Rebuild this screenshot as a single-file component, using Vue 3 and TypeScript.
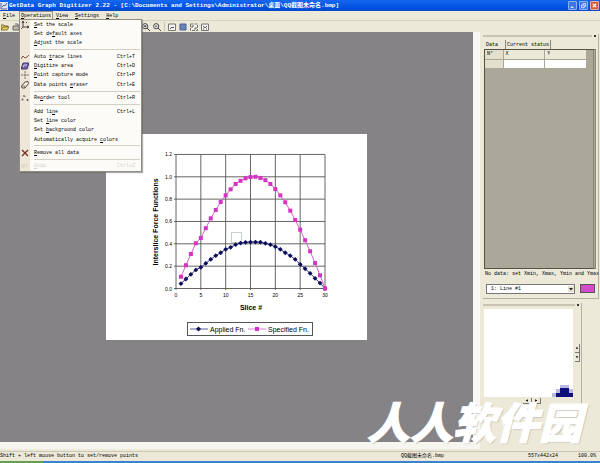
<script setup lang="ts">
import { computed, ref } from 'vue'

interface MenuItem {
  before: string
  key: string
  after: string
  shortcut?: string
  icon?: string
  disabled?: boolean
}

const menuGroups: MenuItem[][] = [
  [
    { before: '', key: 'S', after: 'et the scale', icon: 'scale' },
    { before: 'Set de', key: 'f', after: 'ault axes' },
    { before: '', key: 'A', after: 'djust the scale' },
  ],
  [
    { before: 'Auto ', key: 't', after: 'race lines', shortcut: 'Ctrl+T', icon: 'trace' },
    { before: '', key: 'D', after: 'igitize area', shortcut: 'Ctrl+D', icon: 'area' },
    { before: '', key: 'P', after: 'oint capture mode', shortcut: 'Ctrl+P', icon: 'point' },
    { before: 'Data points ', key: 'e', after: 'raser', shortcut: 'Ctrl+E', icon: 'eraser' },
  ],
  [{ before: 'Re', key: 'o', after: 'rder tool', shortcut: 'Ctrl+R', icon: 'reorder' }],
  [
    { before: 'Add li', key: 'n', after: 'e', shortcut: 'Ctrl+L' },
    { before: 'Set ', key: 'l', after: 'ine color' },
    { before: 'Set ', key: 'b', after: 'ackground color' },
    { before: 'Automatically acquire ', key: 'c', after: 'olors' },
  ],
  [{ before: '', key: 'R', after: 'emove all data', icon: 'remove' }],
  [{ before: '', key: 'U', after: 'ndo', shortcut: 'Ctrl+Z', icon: 'undo', disabled: true }],
]

const specified = [
  0.105, 0.208, 0.309, 0.405, 0.452, 0.54, 0.628, 0.703, 0.774, 0.834, 0.888, 0.936, 0.964, 0.986, 0.998,
  1, 0.99, 0.97, 0.936, 0.89, 0.834, 0.772, 0.697, 0.613, 0.526, 0.432, 0.333, 0.228, 0.118, 0,
]
const applied = [
  0.043, 0.085, 0.127, 0.166, 0.19, 0.225, 0.261, 0.294, 0.32, 0.351, 0.369, 0.392, 0.407, 0.413, 0.416,
  0.416, 0.415, 0.404, 0.392, 0.374, 0.351, 0.32, 0.294, 0.261, 0.216, 0.177, 0.136, 0.091, 0.049, 0,
]

const toPoints = (values: number[]) =>
  values.map((v, i) => ({ x: 70 + ((i + 1) * 149) / 30, y: 154.5 - v * 111.7 }))
const toLine = (pts: { x: number; y: number }[]) => pts.map((p) => `${p.x},${p.y}`).join(' ')

const specifiedPoints = computed(() => toPoints(specified))
const appliedPoints = computed(() => toPoints(applied))

const yTicks = [0, 1, 2, 3, 4, 5, 6].map((i) => ({ y: 154.5 - i * 22.34, label: (i * 0.2).toFixed(1) }))
const xTicks = [0, 1, 2, 3, 4, 5, 6].map((i) => ({ x: 70 + (i * 149) / 6, label: String(i * 5) }))

const activeLine = ref('1')
</script>

<template>
  <div class="app">
    <header class="title">
      <svg class="logo" viewBox="0 0 8 8"><rect width="8" height="8" fill="#dfe3ee" /><path d="M1 1v6h6M2 5l2-2 1 1 2-3" fill="none" stroke="#5a5f9a" /></svg>
      <h1>GetData Graph Digitizer 2.22 - [C:\Documents and Settings\Administrator\桌面\QQ截图未命名.bmp]</h1>
      <div class="win">
        <button aria-label="Minimize"><svg viewBox="0 0 8 8"><path d="M2 6h3" stroke="#fff" stroke-width="1.4" /></svg></button>
        <button aria-label="Restore"><svg viewBox="0 0 8 8"><path d="M3.5 3V1.8h3v3H5.500M1.800 3.500h3v3h-3z" fill="none" stroke="#fff" stroke-width=".9" /></svg></button>
        <button class="close" aria-label="Close"><svg viewBox="0 0 8 8"><path d="M2 2l4 4M6 2l-4 4" stroke="#fff" stroke-width="1.300" /></svg></button>
      </div>
    </header>

    <nav class="menubar">
      <button><u>F</u>ile</button>
      <div class="open">
        <button class="active"><u>O</u>perations</button>
        <div class="menu">
          <div v-for="(group, g) in menuGroups" :key="g" class="group">
            <button v-for="item in group" :key="item.after" class="item" :disabled="item.disabled">
              <span class="icon">
                <svg v-if="item.icon === 'scale'" viewBox="0 0 8 8"><path d="M2 0v6h6M0 8l2-2M1 2l1-2 1 2M6 5l2 1-2 1" fill="none" stroke="#333" stroke-width=".9" /><path d="M5 1.500h1" stroke="#333" /></svg>
                <svg v-else-if="item.icon === 'trace'" viewBox="0 0 8 8"><path d="M0 6l2-3 2 2 2-1 2-2" fill="none" stroke="#8c5348" /></svg>
                <svg v-else-if="item.icon === 'area'" viewBox="0 0 8 8"><path d="M2 1h6L6 7H0z" fill="#7467a8" stroke="#403670" /><path d="M2 5l1-2h3" fill="none" stroke="#d7d2ea" /></svg>
                <svg v-else-if="item.icon === 'point'" viewBox="0 0 8 8"><path d="M4 0v2.500M4 5.500V8M0 4h2.500M5.500 4H8" stroke="#777" /><circle cx="4" cy="4" r="1" fill="#a06a60" /></svg>
                <svg v-else-if="item.icon === 'eraser'" viewBox="0 0 8 8"><path d="M4 1l3-.5.5 2L4 7H1L.5 5z" fill="#f2ece4" stroke="#5c4a40" /><path d="M1 5l2.500 0L4 7" fill="none" stroke="#5c4a40" stroke-width=".7" /></svg>
                <svg v-else-if="item.icon === 'reorder'" viewBox="0 0 8 8"><circle cx="1.500" cy="5.500" r="1" fill="#8c5348" /><circle cx="3" cy="2" r="1" fill="#777" /><circle cx="6.500" cy="6" r="1" fill="#555" /><path d="M3 2l2 1" stroke="#888" stroke-width=".8" /></svg>
                <svg v-else-if="item.icon === 'remove'" viewBox="0 0 8 8"><path d="M1 1l6 6M7 1L1 7" stroke="#7a2c24" stroke-width="1.400" /></svg>
                <svg v-else-if="item.icon === 'undo'" viewBox="0 0 8 8"><path d="M1 2v3h3M1 5c2-3 5-3 6 0" fill="none" stroke="#d4cfc0" /></svg>
              </span>
              <span class="label">{{ item.before }}<u>{{ item.key }}</u>{{ item.after }}</span>
              <span class="shortcut">{{ item.shortcut }}</span>
            </button>
          </div>
        </div>
      </div>
      <button><u>V</u>iew</button>
      <button><u>S</u>ettings</button>
      <button><u>H</u>elp</button>
    </nav>

    <div class="toolbar">
      <div class="tools">
        <button aria-label="Open"><svg viewBox="0 0 8 8"><path d="M0 7V2h3l1 1h3v1" fill="#e8c95a" stroke="#66571c" stroke-width=".8" /><path d="M0 7l2-3h6L6 7z" fill="#f0d36a" stroke="#66571c" stroke-width=".8" /></svg></button>
        <button aria-label="Save"><svg viewBox="0 0 8 8"><path d="M1 3h6v4H1z" fill="#bdb9a8" stroke="#666" /><path d="M3 1h3v2" fill="none" stroke="#666" /></svg></button>
      </div>
      <div class="tools view">
        <button aria-label="Zoom in"><svg viewBox="0 0 8 8"><circle cx="3.200" cy="3.200" r="2.600" fill="#eee" stroke="#444" /><path d="M5 5l3 3M2 3.200h2.400M3.200 2v2.400" stroke="#444" /></svg></button>
        <button aria-label="Zoom out"><svg viewBox="0 0 8 8"><circle cx="3.200" cy="3.200" r="2.600" fill="#eee" stroke="#444" /><path d="M5 5l3 3M2 3.200h2.400" stroke="#444" /></svg></button>
        <i class="split"></i>
        <button aria-label="Fit image"><svg viewBox="0 0 8 8"><path d="M.5 1h7v6.500h-7z" fill="#f4f2ea" stroke="#777" /><path d="M2 6l2-2 1 1 1-1" fill="none" stroke="#555" /></svg></button>
        <button aria-label="Grid"><svg viewBox="0 0 8 8"><path d="M1 1h6v6H1z" fill="#7185bb" stroke="#445b9c" /><path d="M3 1v6M5 1v6M1 3h6M1 5h6" stroke="#6578ad" stroke-width=".5" /></svg></button>
        <button aria-label="Show window"><svg viewBox="0 0 8 8"><path d="M.5 1h7v6.500h-7z" fill="#f4f2ea" stroke="#777" stroke-dasharray="3 1" /><path d="M2 5V3h2M4 6h2V4" fill="none" stroke="#666" /></svg></button>
        <button aria-label="Show magnifier"><svg viewBox="0 0 8 8"><path d="M.5 1h7v6.500h-7z" fill="#f4f2ea" stroke="#777" /><path d="M2 3l1 1 1 1 2-2M2 6h1M5 6h1" fill="none" stroke="#555" /></svg></button>
      </div>
    </div>

    <main>
      <section class="canvas">
        <svg class="chart" viewBox="0 0 261 206" role="img" aria-label="Interslice Force Functions">
          <rect width="261" height="206" fill="#fff" />
          <g stroke="#555" stroke-width=".9">
            <line v-for="t in yTicks" :key="t.y" x1="68" x2="219" :y1="t.y" :y2="t.y" />
            <line v-for="t in xTicks" :key="t.x" y1="20.500" y2="156" :x1="t.x" :x2="t.x" />
          </g>
          <g class="tick">
            <text v-for="t in yTicks" :key="t.label" x="66" :y="t.y + 2" text-anchor="end">{{ t.label }}</text>
            <text v-for="t in xTicks" :key="t.label" :x="t.x" y="163" text-anchor="middle">{{ t.label }}</text>
          </g>
          <text class="axis" x="145" y="176" text-anchor="middle">Slice #</text>
          <text class="axis" transform="translate(52 88) rotate(-90)" text-anchor="middle">Interslice Force Functions</text>
          <rect x="125.500" y="98.500" width="10" height="10" fill="none" stroke="#b9c9b9" stroke-width=".8" />
          <polyline :points="toLine(appliedPoints)" fill="none" stroke="#33338c" />
          <path v-for="p in appliedPoints" :key="p.x" :d="`M${p.x - 2.4} ${p.y}l2.400-2.400 2.400 2.400-2.400 2.400z`" fill="#0c0c5c" />
          <polyline :points="toLine(specifiedPoints)" fill="none" stroke="#d65fcb" />
          <rect v-for="p in specifiedPoints" :key="p.x" :x="p.x - 2" :y="p.y - 2" width="4" height="4" fill="#d633c4" />
          <rect x="81.500" y="188.500" width="125" height="13" fill="#fff" stroke="#555" />
          <path d="M84 195h18" stroke="#33338c" stroke-width=".8" />
          <path d="M90 195l2.500-2.500 2.500 2.500-2.500 2.500z" fill="#0c0c5c" />
          <text class="key" x="104" y="198">Applied Fn.</text>
          <path d="M142 195h18" stroke="#d65fcb" stroke-width=".8" />
          <rect x="149" y="193" width="4" height="4" fill="#d633c4" />
          <text class="key" x="162" y="198">Specified Fn.</text>
        </svg>
      </section>
      <div class="scroll"></div>

      <aside>
        <section class="panel data">
          <div class="grip"><i></i><button aria-label="Close data panel"></button></div>
          <div class="tabs">
            <button class="on">Data</button>
            <button>Current status</button>
          </div>
          <div class="sheet">
            <table>
              <thead><tr><th class="num">N°</th><th>X</th><th>Y</th></tr></thead>
              <tbody><tr><td class="num"></td><td></td><td></td></tr></tbody>
            </table>
          </div>
          <p>No data: set Xmin, Xmax, Ymin and Ymax</p>
          <div class="line">
            <div class="pick">
              <select v-model="activeLine" aria-label="Line"><option value="1">1: Line #1</option></select>
              <svg viewBox="0 0 6 6"><path d="M1 2h4L3 4.500z" fill="#222" /></svg>
            </div>
            <button class="swatch" aria-label="Line color"></button>
          </div>
        </section>

        <section class="panel lens">
          <div class="grip"><i></i><button aria-label="Close magnifier"></button></div>
          <div class="row">
            <svg class="zoomed" viewBox="0 0 89 88">
              <rect width="89" height="88" fill="#fff" />
              <path d="M68 84h4v-4h4v-4h9v4h4v8H68z" fill="#b9b9e4" />
              <path d="M72 84h4v-4h9v4h4v4H72z" fill="#10107c" />
              <path d="M76 79h9v5h-9z" fill="#10107c" />
            </svg>
            <div class="nudge side">
              <button aria-label="Up"><svg viewBox="0 0 5 9"><path d="M1 5.500h3L2.500 3z" /></svg></button>
              <button aria-label="Down"><svg viewBox="0 0 5 9"><path d="M1 3.500h3L2.500 6z" /></svg></button>
            </div>
          </div>
          <div class="nudge">
            <button aria-label="Left"><svg viewBox="0 0 9 5"><path d="M5.500 1v3L3 2.500z" /></svg></button>
            <button aria-label="Right"><svg viewBox="0 0 9 5"><path d="M3.500 1v3L6 2.500z" /></svg></button>
          </div>
        </section>
      </aside>
      <div class="hscroll"></div>
      <div class="watermark">人人软件园</div>
    </main>

    <footer>
      <span class="hint">Shift + left mouse button to set/remove points</span>
      <span class="file">QQ截图未命名.bmp</span>
      <span class="size">557x442x24</span>
      <span class="pct">100.0%</span>
    </footer>
    <div class="taskbar"><i></i></div>
  </div>
</template>

<style>
body {
  background: #ece9d8;
}
</style>

<style scoped>
.app {
  display: flex;
  flex-direction: column;
  height: 100vh;
  overflow: hidden;
  background: #ece9d8;
  color: #000;
  font: 5px/8px 'Liberation Mono', 'Noto Sans CJK SC', monospace;
}
* {
  box-sizing: border-box;
}
button {
  padding: 0;
  border: 0;
  background: none;
  color: inherit;
  font: inherit;
}
svg {
  display: block;
}
.title {
  display: flex;
  align-items: center;
  gap: 1px;
  flex: 0 0 11px;
  background: linear-gradient(#1668f0, #0353e4 60%, #0448cc);
}
.logo {
  width: 8px;
  height: 8px;
}
h1 {
  flex: 1;
  margin: 0;
  color: #fff;
  font-size: 6px;
  line-height: 10px;
  font-weight: 700;
  white-space: nowrap;
}
.win {
  display: flex;
  gap: 2px;
  padding-right: 1px;
}
.win button {
  width: 9px;
  height: 9px;
  border: 1px solid #8fb2f2;
  border-radius: 1px;
  background: #3d74e6;
}
.win .close {
  border-color: #eab0a0;
  background: #d9532f;
}
.menubar {
  display: flex;
  align-items: flex-start;
  flex: 0 0 9px;
}
.menubar > button {
  padding: 1px 4px 0 3px;
}
.open {
  position: relative;
}
.active {
  display: block;
  height: 9px;
  padding: 0 1px;
  border: 1px solid #9a978a;
  border-bottom: 0;
  line-height: 8px;
}
.menu {
  position: absolute;
  z-index: 2;
  top: 8px;
  left: 0;
  display: flex;
  flex-direction: column;
  width: 123px;
  height: 153px;
  border: 1px solid #8f8c80;
  background: linear-gradient(90deg, #eee7d8 10px, #fcfbf7 10px);
  box-shadow: 1px 1px 1px #6668;
}
.group {
  display: contents;
}
.group + .group::before {
  content: '';
  flex: 0 0 1px;
  margin: 1px 1px 2px 14px;
  background: #d3d0c3;
}
.item {
  display: flex;
  flex: 1;
  align-items: center;
  min-height: 0;
  padding: 0 6px 0 1px;
  text-align: left;
}
.icon {
  width: 13px;
}
.icon svg {
  width: 8px;
  height: 8px;
}
.label {
  flex: 1;
  white-space: nowrap;
}
.item:disabled {
  color: #d4d1c6;
}
.toolbar {
  display: flex;
  flex: 0 0 12px;
  align-items: center;
  padding-left: 1px;
  border-top: 1px solid #d5d2c2;
}
.tools {
  display: flex;
  align-items: center;
  gap: 3px;
  width: 141px;
}
.toolbar button,
.toolbar svg {
  width: 8px;
  height: 8px;
}
.split {
  width: 1px;
  height: 9px;
  background: #c8c5b5;
}
main {
  position: relative;
  display: grid;
  flex: 1;
  grid-template-columns: 1fr 7px 120px;
  grid-template-rows: 1fr 9px;
  min-height: 0;
}
.canvas {
  display: grid;
  place-items: center;
  background: #858385;
}
.chart {
  width: 261px;
  height: 206px;
  font-family: 'Liberation Sans', sans-serif;
}
.tick {
  font-size: 5px;
}
.axis {
  font-size: 7px;
  font-weight: 700;
}
.key {
  font-size: 7px;
}
.scroll {
  background: #f8f7f3;
}
aside {
  grid-row: 1 / 3;
  grid-column: 3;
  padding: 2px 1px 0 3px;
}
.hscroll {
  grid-row: 2;
  grid-column: 1 / 3;
  margin-bottom: 2px;
  background: #f7f5ef;
}
.panel {
  border-right: 1px solid #b4b1a2;
}
.data {
  display: flex;
  flex-direction: column;
  height: 265px;
  border-bottom: 1px solid #b4b1a2;
}
.grip {
  display: flex;
  align-items: center;
  height: 3px;
  gap: 2px;
  padding-right: 2px;
}
.grip i {
  flex: 1;
  height: 2px;
  border: 1px solid #c7c4b4;
}
.grip button {
  width: 2px;
  height: 2px;
  background: #333;
}
.tabs {
  display: flex;
  margin-top: 3px;
  padding-left: 2px;
}
.tabs button {
  height: 9px;
  padding: 0 1px;
  border-right: 1px solid #8a8778;
}
.tabs .on {
  width: 21px;
  text-align: left;
}
.sheet {
  flex: 1;
  margin: 0 2px 0 1px;
  border: 1px solid #555247;
  border-right: 3px double #8a8778;
  background: #aca899;
}
table {
  width: calc(100% - 6px);
  table-layout: fixed;
  border-collapse: collapse;
}
th,
td {
  height: 9px;
  padding: 0 2px;
  border: 1px solid #aaa797;
  border-top: 0;
  border-left: 0;
  background: #ece9d8;
  font-weight: 400;
  line-height: 8px;
  text-align: left;
}
td {
  background: #fff;
}
.num {
  width: 18px;
  background: #e2dfcd;
}
p {
  margin: 1px 0 6px 2px;
  white-space: nowrap;
}
.line {
  display: flex;
  gap: 5px;
  padding: 0 3px 4px 3px;
}
.pick {
  display: flex;
  flex: 1;
  align-items: center;
  border: 1px solid #777;
  background: #fff;
}
.pick svg {
  width: 6px;
  height: 6px;
  background: #e5e2d2;
}
select {
  flex: 1;
  height: 8px;
  padding: 0 4px;
  border: 0;
  background: none;
  appearance: none;
  font: inherit;
}
.swatch {
  width: 15px;
  height: 9px;
  border: 1px solid #555;
  background: #d24dcb;
}
.lens {
  width: 99px;
  margin-top: 4px;
}
.row {
  display: flex;
  align-items: center;
  gap: 2px;
  margin: 3px 0 1px 1px;
}
.zoomed {
  width: 89px;
  height: 88px;
}
.nudge {
  display: flex;
  justify-content: center;
}
.nudge svg {
  width: 8px;
  height: 5px;
}
.nudge button {
  border: solid #777;
  border-width: 0 1px 1px 0;
}
.side {
  flex-direction: column;
}
.side svg {
  width: 4px;
  height: 8px;
}
.watermark {
  position: absolute;
  right: 18px;
  bottom: 4px;
  color: #fff;
  font: italic 900 43px/54px 'Noto Sans CJK SC', sans-serif;
  -webkit-text-stroke: 1px #fff;
  text-shadow: 1px 1px 1px #8888;
}
footer {
  display: flex;
  flex: 0 0 9px;
  border-top: 1px solid #c9c6b6;
  line-height: 9px;
  white-space: nowrap;
}
.hint {
  flex: 1;
}
.file {
  width: 127px;
}
.size {
  width: 50px;
}
.pct {
  width: 22px;
}
.taskbar {
  flex: 0 0 2px;
  background: #3f7fd0;
}
.taskbar i {
  display: block;
  width: 43px;
  height: 2px;
  background: #64a04c;
}
</style>
